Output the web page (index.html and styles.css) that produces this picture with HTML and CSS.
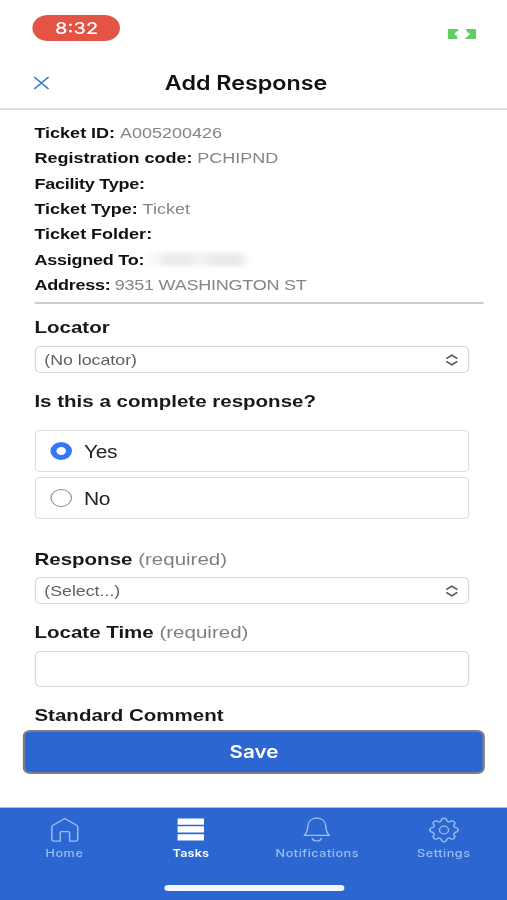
FILE: index.html
```html
<!DOCTYPE html>
<html lang="en">
<head>
<meta charset="utf-8">
<title>Add Response</title>
<link rel="stylesheet" href="styles.css">
</head>
<body>
<div class="screen">
  <div class="status">
    <span class="clock">8:32</span>
    <svg class="battery" width="24" height="10" viewBox="0 0 24 10" fill="#5fcf62"><path d="M1.3 0H9.4L8.6 1.6L6 4.2Q5.4 5.6 7 6.4H8.2L7.6 8.4L8.8 10H1.3Q0 10 0 8.7V1.3Q0 0 1.3 0ZM14.9 0H22.7Q24 0 24 1.3V8.7Q24 10 22.7 10H14.3L15.4 8.4L18.2 5.8Q18.9 4.2 17.3 3.6H15.6L16 1.6Z"/></svg>
  </div>
  <header class="header">
    <svg class="close" width="13" height="14" viewBox="0 0 13 14" fill="none" stroke="#3d76d6" stroke-width="1.4"><path d="M.5 1L12.5 13M12.5 1L.5 13"/></svg>
    <h1 class="title">Add Response</h1>
  </header>
  <main class="content">
    <dl class="details">
      <div class="row"><dt>Ticket ID:</dt><dd>A005200426</dd></div>
      <div class="row"><dt>Registration code:</dt><dd>PCHIPND</dd></div>
      <div class="row tight"><dt>Facility Type:</dt></div>
      <div class="row"><dt>Ticket Type:</dt><dd>Ticket</dd></div>
      <div class="row"><dt>Ticket Folder:</dt></div>
      <div class="row tight"><dt>Assigned To:</dt><dd class="redacted"></dd></div>
      <div class="row tight"><dt>Address:</dt><dd>9351 WASHINGTON ST</dd></div>
    </dl>
    <form class="form">
      <div class="label">Locator</div>
      <div class="select">(No locator)<svg width="11" height="12" viewBox="0 0 11 12" fill="none" stroke="#555" stroke-width="1.4"><path d="M.9 4.6L5.5 1.2L10.1 4.6M.9 7.4L5.5 10.8L10.1 7.4"/></svg></div>
      <div class="label question">Is this a complete response?</div>
      <div class="option"><span class="radio checked"></span><span class="choice">Yes</span></div>
      <div class="option"><span class="radio"></span><span class="choice">No</span></div>
      <div class="label response">Response <span class="hint">(required)</span></div>
      <div class="select">(Select...)<svg width="11" height="12" viewBox="0 0 11 12" fill="none" stroke="#555" stroke-width="1.4"><path d="M.9 4.6L5.5 1.2L10.1 4.6M.9 7.4L5.5 10.8L10.1 7.4"/></svg></div>
      <div class="label">Locate Time <span class="hint">(required)</span></div>
      <div class="input"></div>
      <div class="label comment">Standard Comment</div>
    </form>
  </main>
  <div class="save">Save</div>
  <nav class="tabs">
    <div class="tab">
      <svg width="24" height="26" viewBox="0 0 24 26" fill="none" stroke="currentColor" stroke-width="1.2"><path d="M1.2 10.2Q1.2 9 2.2 8.3L12 1.5L21.8 8.3Q22.8 9 22.8 10.2V22Q22.8 24.2 20.8 24.2H16V15.7Q16 14.7 15 14.7H9.2Q8.2 14.7 8.2 15.7V24.2H3.2Q1.2 24.2 1.2 22Z" stroke-linejoin="round"/></svg>
      <span>Home</span>
    </div>
    <div class="tab active">
      <svg width="24" height="26" viewBox="0 0 24 26" fill="currentColor"><path d="M1 1.5H23V7.7H1ZM1 9.3H23V15.4H1ZM1 17.2H23V23.4H1Z"/></svg>
      <span>Tasks</span>
    </div>
    <div class="tab">
      <svg width="24" height="26" viewBox="0 0 24 26" fill="none" stroke="currentColor" stroke-width="1.2"><path d="M1.5 18.3Q4.3 15.5 4.5 9C4.8 3.8 8 1.2 12 1.2S19.2 3.8 19.5 9Q19.7 15.5 22.5 18.3ZM8.1 21.2Q9 24 12 24T15.9 21.2" stroke-linejoin="round"/></svg>
      <span>Notifications</span>
    </div>
    <div class="tab">
      <svg width="26" height="26" viewBox="0 0 26 26" fill="none" stroke="currentColor" stroke-width="1.2" stroke-linejoin="round"><path d="M10.6 3.8Q11 1.2 13 1.2T15.4 3.8Q16.4 5 17.8 4.8Q20 3.2 21.4 4.6T21.2 8.2Q21 9.8 22.2 10.6Q24.8 11 24.8 13T22.2 15.4Q21 16.2 21.2 17.8Q22.8 20 21.4 21.4T17.8 21.2Q16.4 21 15.4 22.2Q15 24.8 13 24.8T10.6 22.2Q9.6 21 8.2 21.2Q6 22.8 4.6 21.4T4.8 17.8Q5 16.2 3.8 15.4Q1.2 15 1.2 13T3.8 10.6Q5 9.8 4.8 8.2Q3.2 6 4.6 4.6T8.2 4.8Q9.6 5 10.6 3.8Z"/><circle cx="13" cy="13" r="3.8"/></svg>
      <span>Settings</span>
    </div>
    <div class="indicator"></div>
  </nav>
</div>
</body>
</html>
```
FILE: styles.css
```css
* { box-sizing: border-box; }
html { overflow: hidden; }
body {
  margin: 0;
  width: 507px;
  height: 900px;
  overflow: hidden;
  background: #fff;
  font-family: "Liberation Sans", Arial, sans-serif;
}
/* The layout is drawn at 422.5px and widened to the full window. */
.screen {
  width: 422.5px;
  height: 900px;
  display: flex;
  flex-direction: column;
  transform: scaleX(1.2);
  transform-origin: 0 0;
}
.status {
  height: 56px;
  flex: none;
  padding: 15px 25.8px 0 27.3px;
  display: flex;
  justify-content: space-between;
}
.clock {
  width: 73px;
  height: 26px;
  border-radius: 13px;
  background: #e45445;
  color: #fff;
  font: 500 16.5px/26px Inter, sans-serif;
  text-align: center;
}
.battery { margin-top: 13.5px; }
.header {
  height: 54px;
  flex: none;
  padding: 0 40.5px 0 28px;
  display: grid;
  grid-template-columns: 13px 1fr 13px;
  align-items: center;
  border-bottom: 2px solid #dcdddd;
}
.close { margin-top: 1px; }
.title {
  margin: 2px 0 0;
  color: #111;
  font: 600 19.4px/24px Inter, sans-serif;
  text-align: center;
}
.content { height: 620px; flex: none; padding: 10px 19.2px 0 28.7px; }
.details {
  margin: 0;
  height: 183.5px;
  border-bottom: 2px solid #ccc;
}
.row {
  height: 25.3px;
  display: flex;
  align-items: center;
  gap: 4px;
  font-size: 15px;
  white-space: nowrap;
}
.tight { letter-spacing: -.2px; gap: 3.5px; }
dt { font-weight: 700; color: #111; }
dd { margin: 0; color: #858585; }
.redacted {
  width: 84px;
  height: 13px;
  margin-left: -2px;
  background: linear-gradient(90deg, #f8f8f8 0 10%, #ebebeb 18% 42%, #f2f2f2 50% 58%, #e9e9e9 68% 90%, #f6f6f6);
  filter: blur(2px);
}
.form { padding: 14px 12.7px 0 0; }
.label {
  height: 20px;
  line-height: 20px;
  margin-bottom: 8px;
  font-size: 17.1px;
  font-weight: 700;
  color: #191919;
  white-space: nowrap;
}
.hint { font-weight: 400; color: #808080; }
.select {
  height: 27px;
  margin-bottom: 19px;
  padding: 1px 7.2px 0;
  display: flex;
  align-items: center;
  justify-content: space-between;
  border: 1.5px solid #d8d8d8;
  border-radius: 5px;
  color: #606060;
  font-size: 14.8px;
}
.question { margin-bottom: 18px; }
.option {
  height: 42px;
  margin-bottom: 5px;
  padding-left: 12.3px;
  display: flex;
  align-items: center;
  gap: 10px;
  border: 1.5px solid #dfdfdf;
  border-radius: 4px;
  color: #222;
  font-size: 17.5px;
}
.choice { margin-top: 3px; letter-spacing: -.3px; }
.radio {
  width: 18px;
  height: 18px;
  border: 1.5px solid #8c8c8c;
  border-radius: 50%;
}
.checked { border: 5px solid #3478f6; }
.response { margin-top: 31px; margin-bottom: 7px; }
.input {
  height: 36px;
  margin-bottom: 19px;
  border: 1.5px solid #d8d8d8;
  border-radius: 5px;
}
.comment { margin-bottom: 0; }
.save {
  height: 44px;
  flex: none;
  margin: 0 18.3px 0 19px;
  border: 2px solid #7b7e87;
  border-radius: 6px;
  background: #2c67d1;
  color: #fff;
  font: 600 17.2px/40px Inter, sans-serif;
  text-align: center;
}
.tabs {
  height: 93px;
  flex: none;
  margin-top: 33px;
  padding: 9px 0 0 1px;
  display: grid;
  grid-template-columns: repeat(4, 1fr);
  align-content: start;
  background: #2c67d1;
  border-top: 1px solid #a9c0eb;
}
.tab {
  display: flex;
  flex-direction: column;
  align-items: center;
  color: #9dbcf0;
  font: 500 10.6px/14px Inter, sans-serif;
  letter-spacing: .4px;
}
.tab svg { margin-bottom: 4px; }
.active { color: #fff; font-weight: 600; letter-spacing: .1px; }
.indicator {
  grid-column: 1 / -1;
  justify-self: center;
  width: 150px;
  height: 6px;
  margin-top: 24px;
  border-radius: 3px;
  background: #f3f6fc;
}
```
